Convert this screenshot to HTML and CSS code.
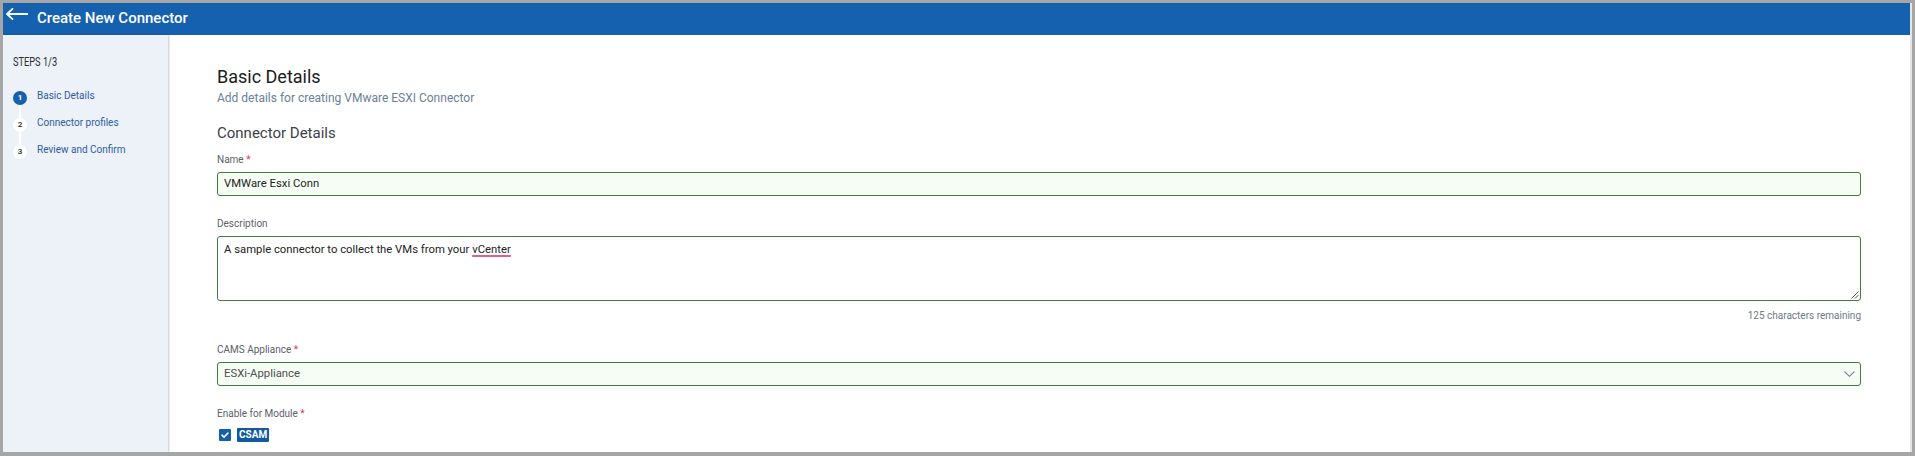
FILE: index.html
```html
<!DOCTYPE html>
<html lang="en">
<head>
<meta charset="utf-8">
<title>Create New Connector</title>
<link rel="stylesheet" href="styles.css">
</head>
<body>
<div class="window">
  <header class="topbar">
    <svg class="back" width="22" height="12" viewBox="0 0 22 12" aria-hidden="true">
      <path d="M1 6 H22 M6.5 0.8 L1 6 L6.5 11.2" fill="none" stroke="#fff" stroke-width="1.8" stroke-linecap="round" stroke-linejoin="round"/>
    </svg>
    <span class="title">Create New Connector</span>
  </header>
  <div class="body">
    <aside class="sidebar">
      <div class="steps-title">STEPS 1/3</div>
      <ol class="steps">
        <li class="step active"><span class="dot">1</span><span class="step-label">Basic Details</span></li>
        <li class="step"><span class="dot">2</span><span class="step-label">Connector profiles</span></li>
        <li class="step"><span class="dot">3</span><span class="step-label">Review and Confirm</span></li>
      </ol>
    </aside>
    <main class="main">
      <h1 class="h1">Basic Details</h1>
      <p class="subtitle">Add details for creating VMware ESXI Connector</p>
      <h2 class="h2">Connector Details</h2>

      <div class="field first">
        <div class="label">Name <span class="req">*</span></div>
        <div class="input">VMWare Esxi Conn</div>
      </div>

      <div class="field">
        <div class="label">Description</div>
        <div class="textarea">A sample connector to collect the VMs from your <span class="spell">vCenter</span>
          <svg class="grip" width="8" height="8" viewBox="0 0 8 8" aria-hidden="true">
            <path d="M7.5 0.5 L0.5 7.5 M7.5 4 L4 7.5" stroke="#555" stroke-width="1" fill="none"/>
          </svg>
        </div>
        <div class="counter">125 characters remaining</div>
      </div>

      <div class="field">
        <div class="label">CAMS Appliance <span class="req">*</span></div>
        <div class="input select"><span class="select-value">ESXi-Appliance</span>
          <svg class="chev" width="11" height="6" viewBox="0 0 11 6" aria-hidden="true">
            <path d="M0.5 0.5 L5.5 5.3 L10.5 0.5" stroke="#7a8799" stroke-width="1.1" fill="none"/>
          </svg>
        </div>
      </div>

      <div class="field">
        <div class="label">Enable for Module <span class="req">*</span></div>
        <div class="check-row">
          <span class="checkbox">
            <svg width="12" height="12" viewBox="0 0 12 12" aria-hidden="true">
              <path d="M3 6.2 L5 8.1 L9 4" stroke="#fff" stroke-width="1.6" fill="none" stroke-linecap="round" stroke-linejoin="round"/>
            </svg>
          </span>
          <span class="badge">CSAM</span>
        </div>
      </div>
    </main>
  </div>
</div>
</body>
</html>
```
FILE: styles.css
```css
* { box-sizing: border-box; }

html, body {
  margin: 0;
  height: 456px;
  overflow: hidden;
}

body {
  background: #a6a6a6;
  padding: 3px 3px 4px 3px;
  font-family: Roboto, "Liberation Sans", Arial, sans-serif;
}

.window {
  height: 449px;
  background: #fff;
  border-right: 2px solid #e6e6e6;
  display: flex;
  flex-direction: column;
  overflow: hidden;
}

.topbar {
  flex: 0 0 32px;
  height: 32px;
  background: #1561b0;
  display: flex;
  align-items: flex-start;
  padding: 5px 0 0 3px;
  color: #fff;
}

.back {
  display: block;
  flex: 0 0 auto;
}

.title {
  margin-left: 9px;
  font-size: 15px;
  line-height: 18px;
  font-weight: 500;
  margin-top: 1px;
}

.body {
  flex: 1 1 auto;
  display: flex;
  min-height: 0;
}

.sidebar {
  flex: 0 0 165px;
  background: #edf2f9;
  box-shadow: 1px 0 2px rgba(0, 0, 0, 0.22);
  position: relative;
  z-index: 1;
  padding: 20px 0 0 10px;
}

.steps-title {
  font-size: 12.5px;
  line-height: 14px;
  color: #2c2c2c;
  transform: scaleX(0.74);
  transform-origin: left center;
  white-space: nowrap;
}

.steps {
  list-style: none;
  margin: 15px 0 0 0;
  padding: 0;
  position: relative;
}

.steps::before {
  content: "";
  position: absolute;
  left: 6px;
  top: 13px;
  height: 54px;
  width: 2px;
  background: #fff;
}

.step {
  height: 27px;
  display: flex;
  align-items: center;
  position: relative;
}

.dot {
  width: 14px;
  height: 14px;
  border-radius: 50%;
  background: #fff;
  color: #222;
  font-size: 8px;
  font-weight: 500;
  display: flex;
  align-items: center;
  justify-content: center;
  flex: 0 0 14px;
  position: relative;
  z-index: 1;
}

.step.active .dot {
  background: #1561ae;
  color: #fff;
  font-weight: 700;
}

.step-label {
  margin-left: 10px;
  font-size: 10px;
  line-height: 12px;
  color: #2d5ca3;
  margin-top: -3px;
  white-space: nowrap;
}

.main {
  flex: 1 1 auto;
  min-width: 0;
  padding: 31px 49px 0 49px;
}

.h1 {
  margin: 0;
  font-size: 18px;
  line-height: 22px;
  font-weight: 400;
  color: #1c1c1c;
}

.subtitle {
  margin: 2px 0 0 0;
  font-size: 12px;
  line-height: 16px;
  color: #6b8096;
}

.h2 {
  margin: 17px 0 0 0;
  font-size: 15px;
  line-height: 20px;
  font-weight: 400;
  color: #3a3f48;
}

.field {
  margin-top: 22px;
}

.field.first {
  margin-top: 11px;
}

.label {
  font-size: 10px;
  line-height: 12px;
  color: #5c6169;
  margin-bottom: 6px;
}

.req {
  color: #d9433f;
}

.input {
  height: 24px;
  border: 1px solid #3d7f37;
  border-radius: 3px;
  background: #f6fdf4;
  padding: 0 6px;
  font-size: 11.3px;
  line-height: 22px;
  color: #222;
  white-space: nowrap;
}

.select {
  display: flex;
  align-items: center;
  justify-content: space-between;
  padding-right: 5px;
}

.select-value {
  color: #4f4f4f;
}

.chev {
  display: block;
}

.textarea {
  position: relative;
  height: 65px;
  border: 1px solid #3d7f37;
  border-radius: 3px;
  background: #fff;
  padding: 5px 6px;
  font-size: 11.3px;
  line-height: 15px;
  color: #222;
}

.spell {
  text-decoration: underline;
  text-decoration-color: #e0608a;
  text-decoration-thickness: 1.5px;
  text-underline-offset: 2px;
}

.grip {
  position: absolute;
  right: 1px;
  bottom: 1px;
  display: block;
}

.counter {
  margin-top: 9px;
  text-align: right;
  font-size: 10px;
  line-height: 12px;
  color: #6e7a86;
}

.check-row {
  display: flex;
  align-items: center;
  height: 14px;
  margin-top: 8px;
  padding-left: 2px;
}

.checkbox {
  width: 12px;
  height: 12px;
  background: #1560aa;
  border-radius: 1px;
  display: block;
}

.checkbox svg {
  display: block;
}

.badge {
  margin-left: 6px;
  height: 14px;
  padding: 0 2px;
  background: #12599f;
  color: #fff;
  font-size: 10px;
  line-height: 14px;
  font-weight: 700;
  border-radius: 1px;
}
```
